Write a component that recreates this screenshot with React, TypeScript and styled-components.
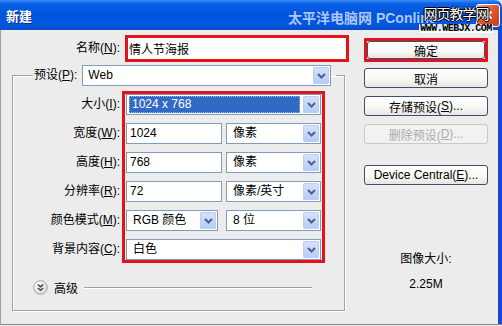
import React from 'react';
import styled, { createGlobalStyle } from 'styled-components';

const GlobalStyle = createGlobalStyle`
  html, body {
    margin: 0;
    padding: 0;
    background: #e6e6e6;
  }
  body {
    font-family: "Liberation Sans", "Noto Sans CJK SC", sans-serif;
    font-size: 12px;
    color: #000;
  }
`;

const Window = styled.div`
  width: 502px;
  height: 324px;
  display: flex;
  flex-direction: column;
  overflow: hidden;
  border-bottom: 1px solid #8c8c8c;
`;

const TitleBar = styled.div`
  position: relative;
  height: 30px;
  flex: none;
  display: flex;
  align-items: center;
  justify-content: space-between;
  padding-left: 6px;
  background: linear-gradient(
    #3d8ef7 0,
    #0b62e6 12%,
    #0054dc 45%,
    #0258e0 80%,
    #0a4cc8 100%
  );
  border-radius: 0 7px 0 0;
`;

const Title = styled.span`
  color: #fff;
  font-family: "Noto Sans CJK SC", sans-serif;
  font-weight: 700;
  font-size: 13px;
  text-shadow: 1px 1px 0 #0a2f8a;
`;

// site watermark burnt into the screenshot, partly under the stamp
const Watermark = styled.div`
  position: absolute;
  left: 288px;
  top: 7px;
  color: rgba(205, 222, 255, 0.85);
  font-family: "Liberation Sans", "Noto Sans CJK SC", sans-serif;
  font-weight: 700;
  font-size: 14px;
  white-space: nowrap;
`;

const Stamp = styled.div`
  position: absolute;
  left: 420px;
  top: 4px;
  width: 72px;
  display: flex;
  flex-direction: column;
  align-items: center;
`;

const StampTitle = styled.span`
  font-family: "Noto Sans CJK SC", sans-serif;
  font-size: 14px;
  line-height: 18px;
  color: #fff;
  letter-spacing: -1px;
  text-shadow: -1px 0 #000, 1px 0 #000, 0 -1px #000, 0 1px #000;
`;

const StampUrl = styled.span`
  font-family: "Liberation Mono", monospace;
  font-weight: 700;
  font-size: 10px;
  line-height: 9px;
  letter-spacing: -0.5px;
  margin-top: 2px;
  color: #000;
  background: rgba(255, 255, 255, 0.85);
  padding: 0 1px;
  white-space: nowrap;
`;

const CloseButton = styled.div`
  width: 22px;
  height: 21px;
  margin-right: 2px;
  border: 1px solid #fff;
  border-radius: 3px;
  background: linear-gradient(135deg, #f0a08a, #e0542e 50%, #c8401c);
  display: flex;
  align-items: center;
  justify-content: center;
`;

const Body = styled.div`
  flex: 1;
  display: flex;
  gap: 8px;
  padding-top: 5px;
  background: #ececec;
  border-left: 1px solid #a0a0a0;
  border-right: 4px solid #1549d4;
`;

const LeftColumn = styled.div`
  width: 355px;
  display: flex;
  flex-direction: column;
`;

const NameRow = styled.div`
  display: flex;
  align-items: center;
  height: 27px;
`;

const Label = styled.label<{ $width?: number }>`
  width: ${(p) => (p.$width ? `${p.$width}px` : 'auto')};
  flex: none;
  text-align: right;
  height: 21px;
  line-height: 21px;
  white-space: nowrap;
  font-family: "Liberation Sans", "Noto Sans CJK SC", sans-serif;
`;

const RedFrame = styled.div<{ $width?: number }>`
  box-sizing: border-box;
  width: ${(p) => (p.$width ? `${p.$width}px` : 'auto')};
  border: 3px solid #e3131b;
`;

const NameFrame = styled(RedFrame)`
  margin-left: 5px;
`;

const NameInput = styled.div`
  height: 21px;
  line-height: 21px;
  padding-left: 1px;
  background: #fff;
  font-family: "Noto Sans CJK SC", sans-serif;
`;

const Group = styled.fieldset`
  margin: 3px 0 0 11px;
  padding: 0 0 15px 0;
  width: 333px;
  box-sizing: border-box;
  border: 1px solid #a3a3a3;
  box-shadow: inset 1px 1px 0 #fff, 1px 1px 0 #fff;
`;

const Legend = styled.legend`
  display: flex;
  align-items: center;
  gap: 5px;
  margin-left: 20px;
  padding: 0 5px 0 1px;
`;

const FieldArea = styled.div`
  display: flex;
  margin-top: 5px;
`;

const LabelColumn = styled.div`
  width: 107px;
  display: flex;
  flex-direction: column;
  gap: 8px;
  padding-top: 3px;
`;

const FieldFrame = styled(RedFrame)`
  margin-left: 2px;
  padding: 0 1px;
  display: flex;
  flex-direction: column;
  gap: 8px;
`;

const FieldRow = styled.div`
  display: flex;
  justify-content: space-between;
  height: 21px;
`;

const Input = styled.div<{ $width: number }>`
  box-sizing: border-box;
  width: ${(p) => p.$width}px;
  height: 21px;
  line-height: 19px;
  padding-left: 3px;
  background: #fff;
  border: 1px solid #7f9db9;
`;

const SelectBox = styled.div<{ $width: number }>`
  box-sizing: border-box;
  width: ${(p) => p.$width}px;
  height: 21px;
  display: flex;
  align-items: stretch;
  gap: 3px;
  padding: 1px;
  background: #fff;
  border: 1px solid #7f9db9;
`;

const SelectText = styled.span<{ $selected?: boolean; $indent?: number }>`
  flex: 1;
  line-height: 17px;
  padding-left: ${(p) => p.$indent ?? 4}px;
  margin: ${(p) => (p.$selected ? '0 0 0 1px' : '0')};
  color: ${(p) => (p.$selected ? '#fff' : '#000')};
  background: ${(p) => (p.$selected ? '#316ac5' : 'transparent')};
  outline: ${(p) => (p.$selected ? '1px dotted #9fb6e0' : 'none')};
  outline-offset: -1px;
  white-space: nowrap;
  overflow: hidden;
`;

const ArrowButton = styled.span`
  width: 16px;
  flex: none;
  display: flex;
  align-items: center;
  justify-content: center;
  border-radius: 2px;
  background: linear-gradient(#d6e3fd, #b5cbf6);
  box-shadow: inset 0 0 0 1px #bccef5;
`;

const AdvancedRow = styled.div`
  display: flex;
  align-items: center;
  margin: 17px 32px 0 20px;
  height: 15px;
  gap: 6px;
`;

const AdvancedText = styled.span`
  font-family: "Noto Sans CJK SC", sans-serif;
`;

const Rule = styled.div`
  flex: 1;
  height: 1px;
  background: #a0a0a0;
  box-shadow: 0 1px 0 #fff;
`;

const RightColumn = styled.div`
  width: 124px;
  display: flex;
  flex-direction: column;
`;

const DefaultFrame = styled(RedFrame)`
  margin-top: 3px;
  border-radius: 1px;
`;

const Button = styled.div<{ $disabled?: boolean; $top?: number }>`
  box-sizing: border-box;
  height: ${(p) => (p.$top === undefined ? 18 : 20)}px;
  margin-top: ${(p) => p.$top ?? 0}px;
  display: flex;
  align-items: center;
  justify-content: center;
  border: 1px solid ${(p) => (p.$disabled ? '#c9c9c9' : '#3b4f6e')};
  border-radius: 3px;
  background: ${(p) =>
    p.$disabled ? '#f2f2f0' : 'linear-gradient(#ffffff 0, #f7f7f4 60%, #e6e5e0 100%)'};
  color: ${(p) => (p.$disabled ? '#ababab' : '#000')};
  white-space: nowrap;
  font-family: "Liberation Sans", "Noto Sans CJK SC", sans-serif;
`;

const Info = styled.div`
  margin-top: 66px;
  display: flex;
  flex-direction: column;
  align-items: center;
  gap: 9px;
  line-height: 16px;
`;

const Chevron = () => (
  <svg width="9" height="6" viewBox="0 0 9 6">
    <path d="M1 1 L4.5 4.5 L8 1" fill="none" stroke="#4d6185" strokeWidth="2" />
  </svg>
);

const CloseX = () => (
  <svg width="10" height="10" viewBox="0 0 10 10">
    <path d="M1.5 1.5 L8.5 8.5 M8.5 1.5 L1.5 8.5" stroke="#fff" strokeWidth="2" />
  </svg>
);

const ExpandIcon = () => (
  <svg width="15" height="15" viewBox="0 0 15 15">
    <defs>
      <radialGradient id="eg" cx="0.4" cy="0.35" r="0.7">
        <stop offset="0" stopColor="#ffffff" />
        <stop offset="1" stopColor="#d8d8d8" />
      </radialGradient>
    </defs>
    <circle cx="7.5" cy="7.5" r="6.8" fill="url(#eg)" stroke="#a6a6a6" />
    <path d="M4.8 4.6 L7.5 6.8 L10.2 4.6 M4.8 8 L7.5 10.2 L10.2 8" fill="none" stroke="#333" strokeWidth="1.3" />
  </svg>
);

const Select = ({ width, text, selected, indent }: { width: number; text: string; selected?: boolean; indent?: number }) => (
  <SelectBox $width={width}>
    <SelectText $selected={selected} $indent={indent}>{text}</SelectText>
    <ArrowButton>
      <Chevron />
    </ArrowButton>
  </SelectBox>
);

const fieldLabels: React.ReactNode[] = [
  <>大小(<u>I</u>):</>,
  <>宽度(<u>W</u>):</>,
  <>高度(<u>H</u>):</>,
  <>分辨率(<u>R</u>):</>,
  <>颜色模式(<u>M</u>):</>,
  <>背景内容(<u>C</u>):</>,
];

function App() {
  return (
    <Window>
      <GlobalStyle />
      <TitleBar>
        <Title>新建</Title>
        <Watermark>太平洋电脑网 PConline</Watermark>
        <CloseButton>
          <CloseX />
        </CloseButton>
        <Stamp>
          <StampTitle>网页教学网</StampTitle>
          <StampUrl>WWW.WEBJX.COM</StampUrl>
        </Stamp>
      </TitleBar>
      <Body>
        <LeftColumn>
          <NameRow>
            <Label $width={119}>名称(<u>N</u>):</Label>
            <NameFrame $width={224}>
              <NameInput>情人节海报</NameInput>
            </NameFrame>
          </NameRow>
          <Group>
            <Legend>
              <Label>预设(<u>P</u>):</Label>
              <Select width={249} text="Web" indent={4} />
            </Legend>
            <FieldArea>
              <LabelColumn>
                {fieldLabels.map((l, i) => (
                  <Label key={i}>{l}</Label>
                ))}
              </LabelColumn>
              <FieldFrame $width={203}>
                <FieldRow>
                  <Select width={195} text="1024 x 768" selected indent={3} />
                </FieldRow>
                <FieldRow>
                  <Input $width={96}>1024</Input>
                  <Select width={95} text="像素" indent={5} />
                </FieldRow>
                <FieldRow>
                  <Input $width={96}>768</Input>
                  <Select width={95} text="像素" indent={5} />
                </FieldRow>
                <FieldRow>
                  <Input $width={96}>72</Input>
                  <Select width={95} text="像素/英寸" indent={5} />
                </FieldRow>
                <FieldRow>
                  <Select width={92} text="RGB 颜色" indent={5} />
                  <Select width={95} text="8 位" indent={5} />
                </FieldRow>
                <FieldRow>
                  <Select width={195} text="白色" indent={5} />
                </FieldRow>
              </FieldFrame>
            </FieldArea>
            <AdvancedRow>
              <ExpandIcon />
              <AdvancedText>高级</AdvancedText>
              <Rule />
            </AdvancedRow>
          </Group>
        </LeftColumn>
        <RightColumn>
          <DefaultFrame>
            <Button>确定</Button>
          </DefaultFrame>
          <Button $top={6}>取消</Button>
          <Button $top={8}>存储预设(<u>S</u>)...</Button>
          <Button $top={8} $disabled>
            删除预设(<u>D</u>)...
          </Button>
          <Button $top={21}>Device Central(<u>E</u>)...</Button>
          <Info>
            <span>图像大小:</span>
            <span>2.25M</span>
          </Info>
        </RightColumn>
      </Body>
    </Window>
  );
}

export default App;
